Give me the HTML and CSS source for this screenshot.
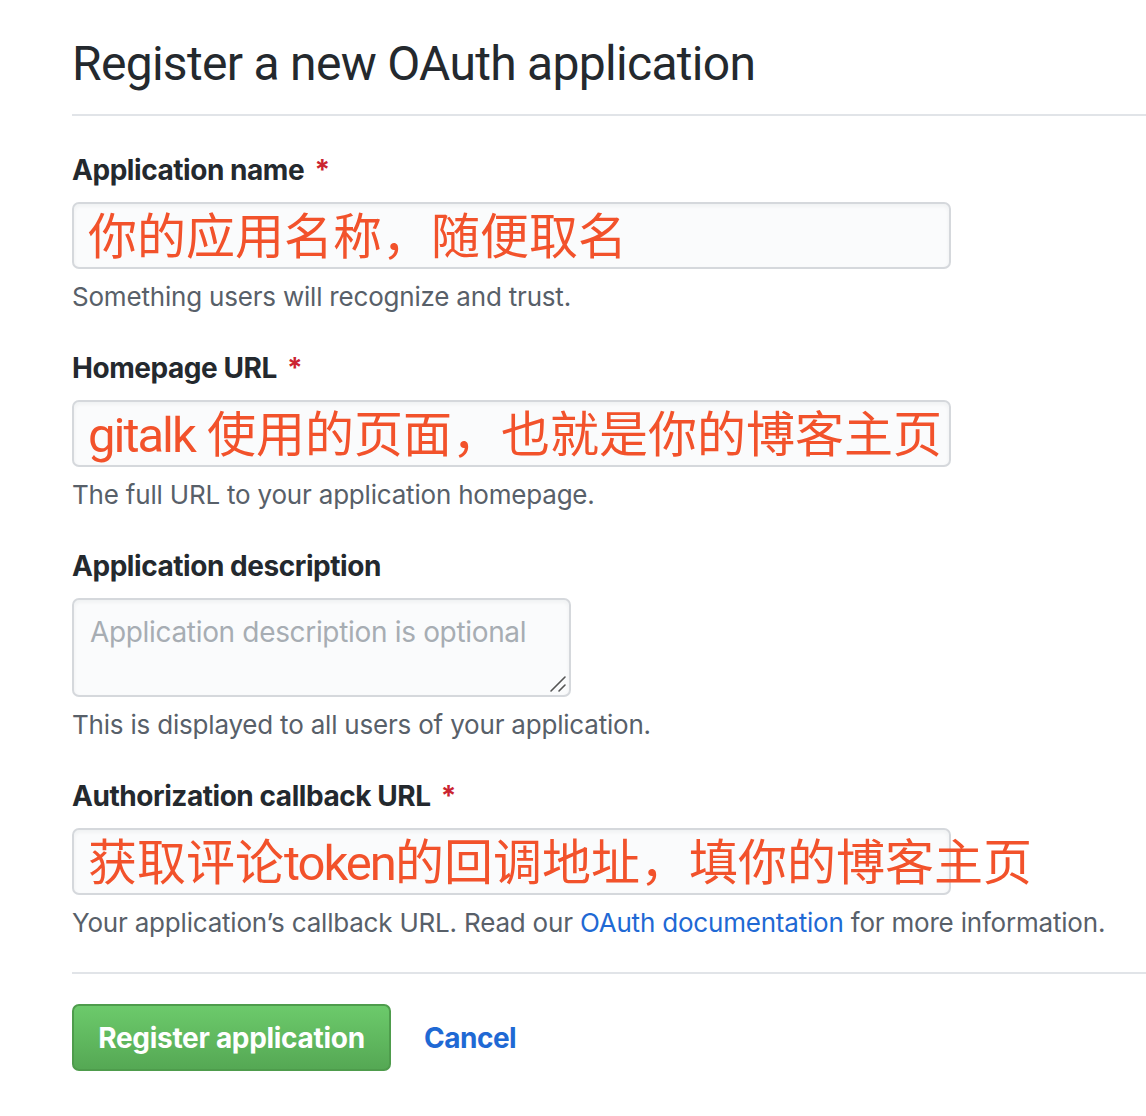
FILE: index.html
```html
<!DOCTYPE html>
<html lang="zh-CN">
<head>
<meta charset="utf-8">
<title>Register a new OAuth application</title>
<link rel="stylesheet" href="styles.css">
</head>
<body>
<div class="page">
  <div class="subhead">
    <h1 class="subhead-title">Register a new OAuth application</h1>
  </div>

  <form class="oauth-form">
    <div class="field">
      <label class="field-label">Application name <span class="req">*</span></label>
      <div class="form-control input"><span class="annot">你的应用名称，随便取名</span></div>
      <p class="note">Something users will recognize and trust.</p>
    </div>

    <div class="field">
      <label class="field-label">Homepage URL <span class="req">*</span></label>
      <div class="form-control input"><span class="annot"><span class="latin">gitalk</span> 使用的页面，也就是你的博客主页</span></div>
      <p class="note">The full URL to your application homepage.</p>
    </div>

    <div class="field">
      <label class="field-label">Application description</label>
      <div class="form-control textarea">
        <span class="placeholder">Application description is optional</span>
        <svg class="grip" width="18" height="18" viewBox="0 0 18 18" aria-hidden="true">
          <line x1="2" y1="16" x2="16" y2="2" stroke="#555" stroke-width="1.6" stroke-linecap="round"/>
          <line x1="10" y1="16" x2="16" y2="10" stroke="#555" stroke-width="1.6" stroke-linecap="round"/>
        </svg>
      </div>
      <p class="note">This is displayed to all users of your application.</p>
    </div>

    <div class="field">
      <label class="field-label">Authorization callback URL <span class="req">*</span></label>
      <div class="form-control input"><span class="annot">获取评论<span class="latin">token</span>的回调地址，填你的博客主页</span></div>
      <p class="note">Your application’s callback URL. Read our <a class="link" href="#">OAuth documentation</a> for more information.</p>
    </div>

    <div class="actions">
      <button type="button" class="btn-primary">Register application</button>
      <a class="cancel" href="#">Cancel</a>
    </div>
  </form>
</div>
</body>
</html>
```

FILE: styles.css
```css
* { box-sizing: border-box; }

html, body {
  margin: 0;
  padding: 0;
  background: #ffffff;
}

body {
  font-family: Inter, "Noto Sans", "Noto Sans CJK SC", sans-serif;
  color: #24292e;
}

.page {
  padding: 34px 0 0 72px;
}

.subhead {
  padding-bottom: 20px;
  border-bottom: 2px solid #e1e4e8;
}

.subhead-title {
  margin: 0;
  font-family: Roboto, "Noto Sans", sans-serif;
  font-size: 48px;
  line-height: 60px;
  font-weight: 400;
  color: #24292e;
  letter-spacing: -0.7px;
}

.oauth-form {
  padding-top: 34px;
}

.field {
  margin-bottom: 33px;
}

.field-label {
  display: block;
  font-size: 28px;
  line-height: 40px;
  font-weight: 700;
  color: #24292e;
  letter-spacing: -0.45px;
  margin-bottom: 12px;
}

.req {
  color: #cb2431;
  margin-left: 4px;
}

.form-control {
  position: relative;
  background: #fafbfc;
  border: 2px solid #d5d8dc;
  border-radius: 7px;
  box-shadow: inset 0 2px 4px rgba(27, 31, 35, 0.05);
}

.input {
  width: 879px;
  height: 67px;
  padding: 0 14px;
  display: flex;
  align-items: center;
  white-space: nowrap;
  overflow: visible;
}

.annot {
  font-family: Roboto, "Noto Sans CJK SC", sans-serif;
  font-size: 49px;
  line-height: 63px;
  color: #f2522b;
  padding-top: 4px;
}

.latin {
  letter-spacing: -2px;
}

.textarea {
  width: 499px;
  height: 99px;
  padding: 12px 16px;
}

.placeholder {
  display: block;
  font-size: 28px;
  line-height: 40px;
  color: #a7adb3;
  letter-spacing: -0.33px;
}

.grip {
  position: absolute;
  right: 2px;
  bottom: 2px;
}

.note {
  margin: 10px 0 0;
  font-size: 26px;
  line-height: 36px;
  color: #586069;
  letter-spacing: -0.2px;
}

.link {
  color: #1f69d4;
  text-decoration: none;
}

.actions {
  margin-top: -2px;
  border-top: 2px solid #e1e4e8;
  padding-top: 30px;
  display: flex;
  align-items: center;
  gap: 33px;
}

.btn-primary {
  width: 319px;
  height: 67px;
  padding: 0;
  border: 2px solid #4e9c4c;
  border-radius: 7px;
  background: linear-gradient(180deg, #6cca6b 0%, #55a854 100%);
  color: #ffffff;
  font-family: Inter, "Noto Sans", sans-serif;
  font-size: 28px;
  font-weight: 700;
  line-height: 40px;
  letter-spacing: -0.3px;
  cursor: pointer;
}

.cancel {
  font-size: 28px;
  font-weight: 700;
  line-height: 40px;
  color: #1f69d4;
  letter-spacing: -0.5px;
  text-decoration: none;
}
```
